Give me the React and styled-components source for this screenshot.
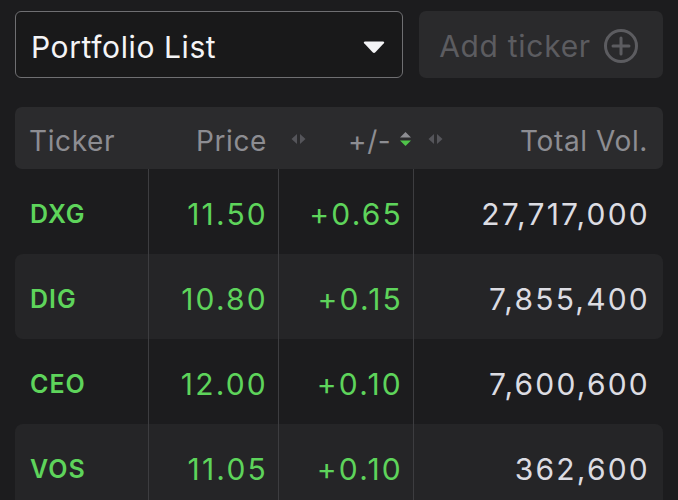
import React from "react";
import styled, { createGlobalStyle } from "styled-components";

const Global = createGlobalStyle`
  html, body { margin: 0; padding: 0; background: #1c1c1e; }
  body { font-family: Inter, "Noto Sans", sans-serif; -webkit-font-smoothing: antialiased; }
`;

const Page = styled.div`
  width: 678px;
  height: 500px;
  overflow: hidden;
  box-sizing: border-box;
  padding: 11px 15px 0 15px;
  background: #1c1c1e;
`;

const TopBar = styled.div`
  display: flex;
  gap: 16px;
  height: 67px;
`;

const Select = styled.div`
  width: 388px;
  box-sizing: border-box;
  border: 1.5px solid #6f6f72;
  border-radius: 6px;
  background: #19191a;
  display: flex;
  align-items: center;
  justify-content: space-between;
  padding: 4px 16px 0 15px;
  color: #f4f4f6;
  font-size: 30px;
  letter-spacing: 0.6px;
`;

const AddButton = styled.div`
  flex: 1;
  border-radius: 7px;
  background: #2a2a2c;
  display: flex;
  align-items: center;
  justify-content: center;
  gap: 12px;
  color: #5c5c60;
  font-size: 30px;
  letter-spacing: 0.7px;
  padding: 3px 4px 0 0;
`;

const Table = styled.div`
  margin-top: 29px;
  display: flex;
  flex-direction: column;
`;

const Header = styled.div`
  height: 62px;
  box-sizing: border-box;
  padding-top: 5px;
  border-radius: 7px;
  background: #2b2b2d;
  display: flex;
  align-items: center;
  color: #8d8d92;
  font-size: 28px;
  letter-spacing: 0.6px;
`;

const HeadLabel = styled.span`
  width: ${(p) => p.$w || "auto"};
  padding-left: ${(p) => p.$pl || "0"};
  margin-left: ${(p) => p.$ml || "0"};
  box-sizing: border-box;
  text-align: ${(p) => p.$align || "left"};
  flex: ${(p) => (p.$grow ? 1 : "none")};
  padding-right: ${(p) => p.$pr || "0"};
  white-space: nowrap;
`;

const IconSlot = styled.span`
  display: inline-flex;
  margin-left: ${(p) => p.$ml};
  margin-top: -4px;
`;

const Row = styled.div`
  display: grid;
  grid-template-columns: 133px 130px 135px 1fr;
  height: 85px;
  border-radius: 8px;
  background: ${(p) => (p.$alt ? "#252527" : "transparent")};
`;

const Cell = styled.div`
  display: flex;
  align-items: center;
  justify-content: ${(p) => (p.$left ? "flex-start" : "flex-end")};
  padding: ${(p) => (p.$left ? "4px 0 0 15px" : "4px 10px 0 0")};
  border-left: ${(p) => (p.$first ? "none" : "1.5px solid #3d3d40")};
  font-size: 30px;
  letter-spacing: 2.2px;
  color: ${(p) => p.$color || "#5ed45b"};
  font-weight: ${(p) => (p.$bold ? 600 : 400)};
  ${(p) => p.$bold && "font-size: 25px; letter-spacing: 1px;"}
  ${(p) => p.$last && "padding-right: 13px;"}
`;

const Caret = () => (
  <svg width="24" height="14" viewBox="0 0 24 14">
    <path d="M3 1.5 H21 Q23 1.5 21.8 3.2 L13.4 12.2 Q12 13.6 10.6 12.2 L2.2 3.2 Q1 1.5 3 1.5 Z" fill="#f4f4f6" />
  </svg>
);

const PlusCircle = () => (
  <svg width="36" height="36" viewBox="0 0 36 36">
    <circle cx="18" cy="18" r="15.5" fill="none" stroke="#5c5c60" strokeWidth="3" />
    <path d="M18 10 V26 M10 18 H26" stroke="#5c5c60" strokeWidth="3" strokeLinecap="round" />
  </svg>
);

const HArrows = () => (
  <svg width="17" height="12" viewBox="0 0 17 12">
    <path d="M7 1 L1.5 6 L7 11 Z" fill="#55555a" />
    <path d="M10 1 L15.5 6 L10 11 Z" fill="#55555a" />
  </svg>
);

const VSort = () => (
  <svg width="13" height="16" viewBox="0 0 13 16">
    <path d="M6.5 1 L12 6.5 H1 Z" fill="#8d8d92" />
    <path d="M1 9.5 H12 L6.5 15 Z" fill="#4fc449" />
  </svg>
);

const rows = [
  { t: "DXG", p: "11.50", c: "+0.65", v: "27,717,000" },
  { t: "DIG", p: "10.80", c: "+0.15", v: "7,855,400" },
  { t: "CEO", p: "12.00", c: "+0.10", v: "7,600,600" },
  { t: "VOS", p: "11.05", c: "+0.10", v: "362,600" },
];

export default function App() {
  return (
    <>
      <Global />
      <Page>
        <TopBar>
          <Select>
            <span>Portfolio List</span>
            <Caret />
          </Select>
          <AddButton>
            <span>Add ticker</span>
            <PlusCircle />
          </AddButton>
        </TopBar>
        <Table>
          <Header>
            <HeadLabel $w="133px" $pl="14px">Ticker</HeadLabel>
            <HeadLabel $w="119px" $align="right">Price</HeadLabel>
            <IconSlot $ml="23px"><HArrows /></IconSlot>
            <HeadLabel $ml="41px">+/-</HeadLabel>
            <IconSlot $ml="8px"><VSort /></IconSlot>
            <IconSlot $ml="15px"><HArrows /></IconSlot>
            <HeadLabel $grow $align="right" $pr="15px">Total Vol.</HeadLabel>
          </Header>
          {rows.map((r, i) => (
            <Row key={r.t} $alt={i % 2 === 1}>
              <Cell $first $left $bold>{r.t}</Cell>
              <Cell>{r.p}</Cell>
              <Cell>{r.c}</Cell>
              <Cell $last $color="#dcdce2">{r.v}</Cell>
            </Row>
          ))}
        </Table>
      </Page>
    </>
  );
}
